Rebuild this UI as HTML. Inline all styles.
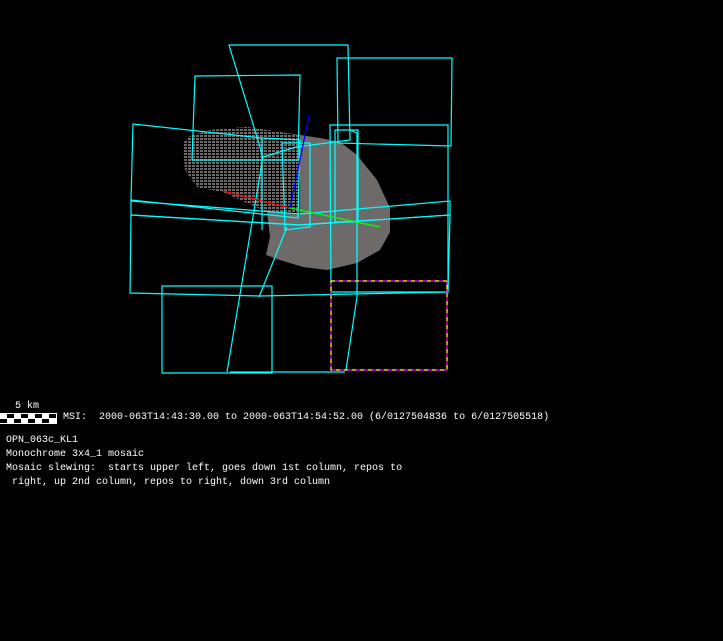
<!DOCTYPE html>
<html><head><meta charset="utf-8"><style>
html,body{margin:0;padding:0;background:#000;width:723px;height:641px;overflow:hidden}
svg{position:absolute;left:0;top:0}
.t{position:absolute;left:6px;font-family:"Liberation Mono",monospace;font-size:10px;color:#fff;white-space:pre;line-height:14px}
</style></head><body>
<svg width="723" height="641" viewBox="0 0 723 641">
<defs>
<pattern id="dots" width="4" height="3" patternUnits="userSpaceOnUse">
<rect width="4" height="3" fill="#000"/>
<rect x="0" y="0" width="3" height="2" fill="#6e6a6a"/>
</pattern>
</defs>
<path d="M183,143 L190,136 L210,130 L247,127 L280,132 L320,138 L340,142 L357,155 L377,180 L390,208 L390,232 L380,250 L357,263 L327,270 L303,267 L280,260 L266,255 L270,237 L267,212 L223,192 L197,187 L185,170 Z" fill="#6e6a6a"/>
<path d="M183,143 L190,136 L210,130 L247,127 L280,132 L300,136 L300,215 L267,212 L223,192 L197,187 L185,170 Z" fill="url(#dots)"/>
<g fill="none" stroke="#00ffff" stroke-width="1.2">
<polygon points="229,45 348,45 350,140 296,147 263,157"/>
<polygon points="195,76 300,75 298,160 192,160"/>
<polygon points="337,58 452,58 451,146 338,143"/>
<polygon points="133,124 262,138 300,140 298,218 131,200"/>
<polygon points="131,215 298,225 450,215 448,292 260,296 130,293"/>
<polygon points="131,201 300,214 450,201 450,215 300,225 131,215"/>
<polygon points="330,125 448,125 448,292 331,292"/>
<polygon points="162,286 272,286 272,373 162,373"/>
<line x1="227" y1="372" x2="263" y2="157"/>
<line x1="259" y1="297" x2="287" y2="227"/>
<line x1="230" y1="372" x2="345" y2="372"/>
<polyline points="350,130 357,133 357,297 346,370"/>
<polyline points="262,138 262,230"/>
<polygon points="282,143 310,143 310,227 285,230"/>
<polygon points="335,130 358,130 358,222 335,222"/>
</g>
<g fill="none" stroke-width="1.2">
<rect x="331" y="281" width="116" height="89" stroke="#ff00ff"/>
<rect x="331" y="281" width="116" height="89" stroke="#ffff00" stroke-dasharray="4,4"/>
</g>
<line x1="309" y1="116" x2="290" y2="208" stroke="#0000ff" stroke-width="1.3"/>
<line x1="223" y1="191" x2="290" y2="208" stroke="#ff0000" stroke-width="1.3"/>
<line x1="290" y1="208" x2="380" y2="227" stroke="#00ff00" stroke-width="1.3"/>
<rect x="0.5" y="413.5" width="56" height="10" fill="#fff" stroke="#fff"/>
<rect x="7" y="414" width="7" height="4" fill="#000"/>
<rect x="21" y="414" width="7" height="4" fill="#000"/>
<rect x="35" y="414" width="7" height="4" fill="#000"/>
<rect x="49" y="414" width="7" height="4" fill="#000"/>
<rect x="0" y="419" width="7" height="4" fill="#000"/>
<rect x="14" y="419" width="7" height="4" fill="#000"/>
<rect x="28" y="419" width="7" height="4" fill="#000"/>
<rect x="42" y="419" width="7" height="4" fill="#000"/>
</svg>
<div class="t" style="top:400px;left:15px">5 km</div>
<div class="t" style="top:411px;left:63px">MSI:  2000-063T14:43:30.00 to 2000-063T14:54:52.00 (6/0127504836 to 6/0127505518)</div>
<div class="t" style="top:434px">OPN_063c_KL1
Monochrome 3x4_1 mosaic
Mosaic slewing:  starts upper left, goes down 1st column, repos to
 right, up 2nd column, repos to right, down 3rd column</div>
</body></html>
